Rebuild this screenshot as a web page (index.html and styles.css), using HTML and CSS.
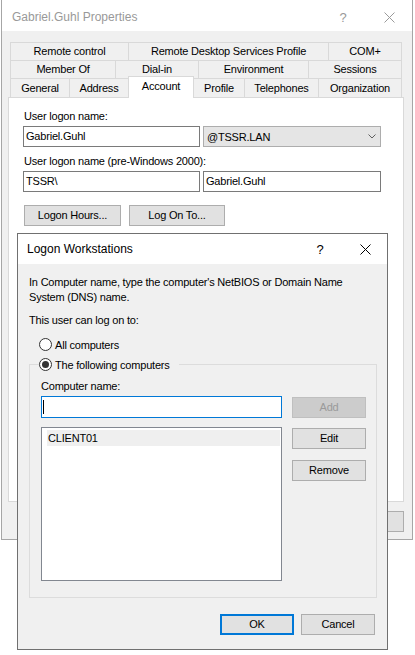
FILE: index.html
```html
<!DOCTYPE html>
<html>
<head>
<meta charset="utf-8">
<title>Gabriel.Guhl Properties</title>
<link rel="stylesheet" href="styles.css">
</head>
<body>
<div class="win">
  <div class="titlebar">
    <span class="title">Gabriel.Guhl Properties</span>
    <span class="cap cap-help">?</span>
    <span class="cap cap-close"><svg width="11" height="11" viewBox="0 0 11 11"><path d="M0.5 0.5 L10.5 10.5 M10.5 0.5 L0.5 10.5" stroke="#9a9a9a" stroke-width="1" fill="none"/></svg></span>
  </div>
  <div class="win-body">
    <div class="tabs">
      <div class="tab-row">
        <div class="tab t-rc">Remote control</div>
        <div class="tab t-rdsp">Remote Desktop Services Profile</div>
        <div class="tab t-fill">COM+</div>
      </div>
      <div class="tab-row">
        <div class="tab t-mo">Member Of</div>
        <div class="tab t-di">Dial-in</div>
        <div class="tab t-env">Environment</div>
        <div class="tab t-fill">Sessions</div>
      </div>
      <div class="tab-row last">
        <div class="tab t-gen">General</div>
        <div class="tab t-addr">Address</div>
        <div class="tab t-acc sel">Account</div>
        <div class="tab t-prof">Profile</div>
        <div class="tab t-tel">Telephones</div>
        <div class="tab t-fill">Organization</div>
      </div>
    </div>
    <div class="panel">
      <div class="lbl">User logon name:</div>
      <div class="row">
        <div class="inp">Gabriel.Guhl</div>
        <div class="combo"><span>@TSSR.LAN</span><svg width="8" height="5" viewBox="0 0 8 5"><path d="M0.5 0.5 L4 4 L7.5 0.5" stroke="#606060" stroke-width="1" fill="none"/></svg></div>
      </div>
      <div class="lbl lbl2">User logon name (pre-Windows 2000):</div>
      <div class="row">
        <div class="inp">TSSR\</div>
        <div class="inp inp-wide">Gabriel.Guhl</div>
      </div>
      <div class="panel-buttons">
        <button class="btn b-hours">Logon Hours...</button>
        <button class="btn b-logon">Log On To...</button>
      </div>
    </div>
    <div class="win-buttons">
      <button class="btn wb">OK</button>
      <button class="btn wb">Cancel</button>
      <button class="btn wb">Apply</button>
      <button class="btn wb">Help</button>
    </div>
  </div>
</div>

<div class="dlg">
  <div class="dlg-title">
    <span class="dtitle">Logon Workstations</span>
    <span class="dcap dcap-help">?</span>
    <span class="dcap dcap-close"><svg width="11" height="11" viewBox="0 0 11 11"><path d="M0.5 0.5 L10.5 10.5 M10.5 0.5 L0.5 10.5" stroke="#000" stroke-width="1" fill="none"/></svg></span>
  </div>
  <div class="dlg-body">
    <div class="desc">In Computer name, type the computer's NetBIOS or Domain Name<br>System (DNS) name.</div>
    <div class="canlog">This user can log on to:</div>
    <div class="radio-row r-all"><span class="radio"></span><span>All computers</span></div>
    <fieldset class="group">
      <legend class="legend"><span class="radio checked"><span class="dot"></span></span><span>The following computers</span></legend>
      <div class="group-inner">
        <div class="left-col">
          <div class="cn-lbl">Computer name:</div>
          <div class="cn-inp"><span class="caret"></span></div>
          <div class="list">
            <div class="item">CLIENT01</div>
          </div>
        </div>
        <div class="right-col">
          <button class="btn sb disabled">Add</button>
          <button class="btn sb b-edit">Edit</button>
          <button class="btn sb b-remove">Remove</button>
        </div>
      </div>
    </fieldset>
    <div class="dlg-footer">
      <button class="btn fb ok">OK</button>
      <button class="btn fb">Cancel</button>
    </div>
  </div>
</div>
</body>
</html>
```
FILE: styles.css
```css
* { box-sizing: border-box; }
html, body { margin: 0; padding: 0; background: #fff; }
body {
  font-family: "Liberation Sans", Arial, sans-serif;
  font-size: 11px;
  letter-spacing: -0.2px;
  color: #000;
  position: relative;
  width: 415px;
  height: 655px;
  overflow: hidden;
}

/* outer window */
.win {
  margin-left: 1px;
  width: 412px;
  height: 540px;
  border: 1px solid #a6a6a6;
  border-top: 0;
  background: #f0f0f0;
  display: flex;
  flex-direction: column;
}
.titlebar {
  height: 31px;
  flex: none;
  background: #fff;
  display: flex;
  align-items: center;
  padding: 3px 0 0 10px;
}
.title { flex: 1; font-size: 12px; letter-spacing: 0; color: #999; }
.cap { width: 46px; text-align: center; color: #999; font-size: 13px; letter-spacing: 0; display: flex; justify-content: center; }
.cap-close { width: 46px; }

.win-body { flex: 1; padding-top: 11px; display: flex; flex-direction: column; }
.tabs { margin-left: 8px; width: 392px; }
.tab-row { display: flex; align-items: flex-start; height: 18px; }
.tab-row.last { height: 19px; }
.tab {
  height: 18px;
  line-height: 17px;
  border: 1px solid #d9d9d9;
  border-bottom: 0;
  background: #f0f0f0;
  text-align: center;
  white-space: nowrap;
}
.tab + .tab { margin-left: -1px; }
.tab-row.last .tab { height: 19px; line-height: 18px; }
.tab-row.last .tab.sel {
  margin-top: -2px;
  height: 22px;
  background: #fff;
  position: relative;
  z-index: 1;
}
.t-rc { width: 119px; }
.t-rdsp { width: 201px; }
.t-mo { width: 106px; }
.t-di { width: 84px; }
.t-env { width: 111px; }
.t-gen { width: 60px; }
.t-addr { width: 60px; }
.t-acc { width: 66px; }
.t-prof { width: 52px; }
.t-tel { width: 75px; }
.t-fill { flex: 1; }

.panel {
  margin-left: 6px;
  width: 396px;
  height: 405px;
  border: 1px solid #d9d9d9;
  background: #fff;
  padding: 12px 0 0 14px;
}
.lbl { height: 13px; line-height: 13px; margin: 0 0 3px 1px; white-space: nowrap; }
.lbl2 { margin-top: 8px; }
.row { display: flex; gap: 3px; }
.inp {
  width: 177px;
  height: 21px;
  border: 1px solid #7a7a7a;
  background: #fff;
  padding-left: 2px;
  line-height: 19px;
}
.inp-wide { width: 178px; }
.combo {
  width: 178px;
  height: 21px;
  border: 1px solid #adadad;
  background: #e5e5e5;
  display: flex;
  align-items: center;
  justify-content: space-between;
  padding: 0 3px 0 3px;
}
.combo svg { margin-right: 1px; }

.btn {
  font: inherit;
  letter-spacing: inherit;
  color: #000;
  margin: 0;
  padding: 0;
  height: 21px;
  border: 1px solid #adadad;
  background: #e1e1e1;
  text-align: center;
  line-height: 19px;
}
.panel-buttons { display: flex; gap: 8px; margin: 13px 0 0 1px; }
.b-hours { width: 97px; }
.b-logon { width: 96px; }

.win-buttons {
  display: flex;
  justify-content: flex-end;
  gap: 6px;
  margin: 9px 0 0 6px;
  width: 396px;
}
.wb { width: 75px; }

/* modal dialog over the window */
.dlg {
  position: absolute;
  left: 17px;
  top: 233px;
  width: 371px;
  height: 417px;
  border: 1px solid #707070;
  background: #f0f0f0;
  display: flex;
  flex-direction: column;
}
.dlg-title {
  height: 30px;
  flex: none;
  background: #fff;
  display: flex;
  align-items: center;
  padding-left: 9px;
}
.dtitle { flex: 1; font-size: 12px; letter-spacing: 0; }
.dcap { display: flex; justify-content: center; font-size: 13px; letter-spacing: 0; }
.dcap-help { width: 46px; }
.dcap-close { width: 44px; }

.dlg-body { flex: 1; padding: 11px 10px 0 11px; }
.desc { line-height: 15px; white-space: nowrap; }
.canlog { line-height: 15px; margin-top: 8px; }
.radio-row { display: flex; align-items: center; gap: 3px; height: 15px; margin: 9px 0 0 10px; }
.radio {
  width: 13px;
  height: 13px;
  border: 1px solid #333;
  border-radius: 50%;
  background: #fff;
  display: flex;
  align-items: center;
  justify-content: center;
  flex: none;
}
.dot { width: 7px; height: 7px; border-radius: 50%; background: #333; }

.group {
  margin: 5px 0 0 0;
  width: 348px;
  border: 1px solid #dcdcdc;
  padding: 0 10px 16px 11px;
  min-width: 0;
}
.legend {
  display: flex;
  align-items: center;
  gap: 3px;
  height: 15px;
  padding: 0 9px 0 0;
  margin-left: -2px;
}
.group-inner { display: flex; gap: 10px; }
.left-col { width: 241px; }
.cn-lbl { line-height: 15px; margin-top: 7px; }
.cn-inp {
  margin-top: 2px;
  height: 22px;
  border: 1px solid #0078d7;
  background: #fff;
  display: flex;
  align-items: center;
  padding-left: 1px;
}
.caret { width: 1px; height: 14px; background: #000; }
.list {
  margin-top: 9px;
  height: 154px;
  border: 1px solid #828790;
  background: #fff;
  padding: 2px 1px 0 5px;
}
.item { height: 16px; line-height: 16px; background: #efefef; padding-left: 1px; }
.right-col { width: 74px; display: flex; flex-direction: column; padding-top: 25px; }
.sb { width: 74px; }
.disabled { background: #cccccc; border-color: #bfbfbf; color: #9a9a9a; }
.b-edit { margin-top: 10px; }
.b-remove { margin-top: 11px; }

.dlg-footer { display: flex; justify-content: flex-end; gap: 7px; margin-top: 16px; padding-right: 2px; }
.fb { width: 74px; }
.ok { border: 2px solid #0078d7; line-height: 17px; }
```
